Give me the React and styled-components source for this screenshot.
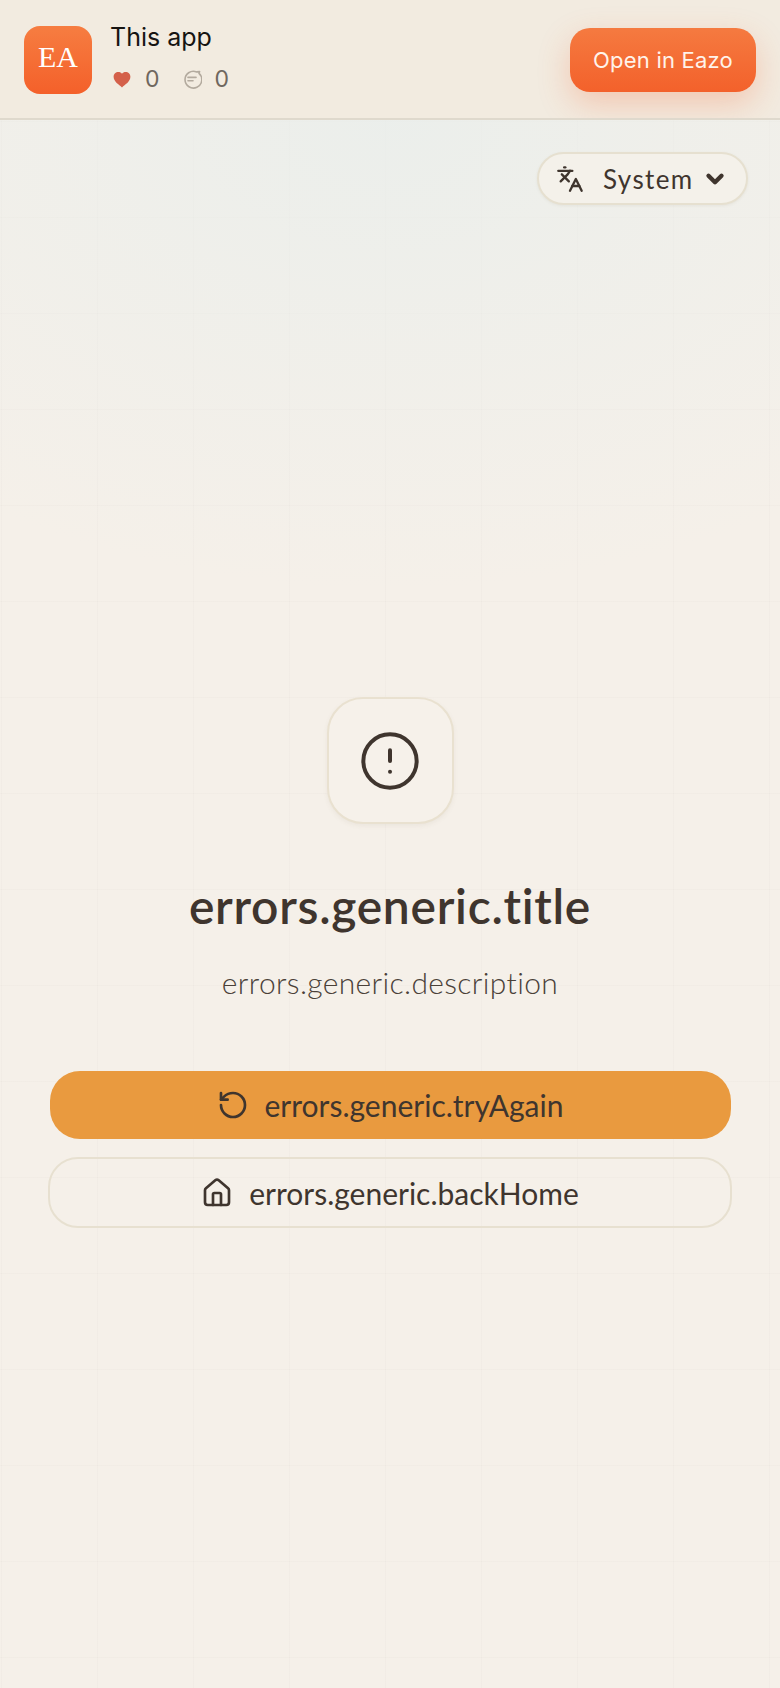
import React from 'react';
import styled, { createGlobalStyle } from 'styled-components';
import { ChevronDown, CircleAlert, House, Languages, RotateCcw } from 'lucide-react';

const GlobalStyle = createGlobalStyle`
	html,
	body {
		margin: 0;
		padding: 0;
		background: #f5f0e9;
	}
	* {
		box-sizing: border-box;
	}
`;

const App = () => {
	return (
		<Page>
			<GlobalStyle />
			<TopBar>
				<AppIcon>EA</AppIcon>
				<AppInfo>
					<AppName>This app</AppName>
					<Stats>
						<Stat>
							<svg width="20" height="20" viewBox="0 0 20 20">
								<path
									d="M10 18.4 C7 15.8 1.6 12.6 1.6 7.8 C1.6 4.9 3.8 3 6.3 3 C8 3 9.2 3.6 10 4.7 C10.8 3.6 12 3 13.7 3 C16.2 3 18.4 4.9 18.4 7.8 C18.4 12.6 13 15.8 10 18.4 Z"
									fill="#d4604a"
								/>
							</svg>
							<StatValue>0</StatValue>
						</Stat>
						<Stat>
							<svg width="20" height="20" viewBox="0 0 20 20" fill="none" stroke="#b3aa9e" strokeWidth="1.6" strokeLinecap="round">
								<path d="M17.6 2.6 L17 4.4 A8.4 8.4 0 1 1 14.6 2.9 Z" strokeLinejoin="round" />
								<path d="M6 8.4 H14" />
								<path d="M6 11.8 H11" />
							</svg>
							<StatValue>0</StatValue>
						</Stat>
					</Stats>
				</AppInfo>
				<OpenButton>Open in Eazo</OpenButton>
			</TopBar>
			<Content>
				<LangRow>
					<LangPill>
						<Languages size={28} strokeWidth={2} />
						<LangLabel>System</LangLabel>
						<ChevronDown size={26} strokeWidth={4} />
					</LangPill>
				</LangRow>
				<ErrorBlock>
					<IconCard>
						<CircleAlert size={64} strokeWidth={1.5} />
					</IconCard>
					<Title>errors.generic.title</Title>
					<Description>errors.generic.description</Description>
					<Actions>
						<PrimaryAction>
							<RotateCcw size={32} strokeWidth={2} />
							errors.generic.tryAgain
						</PrimaryAction>
						<SecondaryAction>
							<House size={32} strokeWidth={2} />
							errors.generic.backHome
						</SecondaryAction>
					</Actions>
				</ErrorBlock>
			</Content>
		</Page>
	);
};

export default App;

const Page = styled.div`
	width: 780px;
	height: 1688px;
	overflow: hidden;
	display: flex;
	flex-direction: column;
	color: #3f352e;
	font-family: 'Lato', 'Noto Sans', sans-serif;
	font-variant-ligatures: none;
	background-color: #f5f0e9;
	background-image:
		radial-gradient(ellipse 720px 470px at 390px 0px, rgba(232, 238, 236, 0.75), rgba(232, 238, 236, 0) 100%),
		linear-gradient(rgba(120, 100, 70, 0.022) 1px, transparent 1px),
		linear-gradient(90deg, rgba(120, 100, 70, 0.022) 1px, transparent 1px);
	background-size: auto, 96px 96px, 96px 96px;
	background-position: 0 119px, 1px 121px, 1px 121px;
	background-repeat: no-repeat, repeat, repeat;
`;
const TopBar = styled.header`
	display: flex;
	align-items: center;
	height: 120px;
	flex-shrink: 0;
	padding: 2px 24px 0;
	overflow: hidden;
	background: #f2ebe0;
	border-bottom: 2px solid #dfd9cd;
`;
const AppIcon = styled.div`
	display: flex;
	align-items: center;
	justify-content: center;
	width: 68px;
	height: 68px;
	border-radius: 16px;
	padding-bottom: 6px;
	color: #fff;
	font-family: 'Liberation Serif', serif;
	font-size: 30px;
	background: linear-gradient(180deg, #f67d41, #f4602a);
`;
const AppInfo = styled.div`
	display: flex;
	flex-direction: column;
	gap: 13px;
	margin-left: 18px;
	margin-top: -6px;
	flex: 1;
`;
const AppName = styled.div`
	color: #161412;
	font-family: 'Inter', sans-serif;
	font-size: 25px;
	line-height: 30px;
`;
const Stats = styled.div`
	display: flex;
	gap: 22px;
	padding-left: 2px;
`;
const Stat = styled.div`
	display: flex;
	align-items: center;
	gap: 13px;
`;
const StatValue = styled.span`
	color: #6f675e;
	font-family: 'Inter', sans-serif;
	font-size: 23px;
	line-height: 28px;
`;
const OpenButton = styled.button`
	width: 186px;
	height: 64px;
	border: none;
	border-radius: 20px;
	color: #fff3ea;
	font-family: 'Inter', sans-serif;
	font-size: 22px;
	letter-spacing: 0.2px;
	background: linear-gradient(180deg, #f57a40, #f3612b);
	box-shadow: 0 12px 32px rgba(244, 97, 43, 0.26);
`;
const Content = styled.main`
	flex: 1;
	display: flex;
	flex-direction: column;
`;
const LangRow = styled.div`
	display: flex;
	justify-content: flex-end;
	padding: 32px 32px 0 0;
`;
const LangPill = styled.div`
	display: flex;
	align-items: center;
	width: 211px;
	height: 53px;
	padding: 0 18px 0 17px;
	border: 2px solid #e6e0d0;
	border-radius: 27px;
	background: #f4f1ea;
	box-shadow: 0 1px 3px rgba(120, 100, 70, 0.08);
`;
const LangLabel = styled.span`
	flex: 1;
	margin-left: 19px;
	font-size: 26px;
	letter-spacing: 1.4px;
`;
const ErrorBlock = styled.section`
	display: flex;
	flex-direction: column;
	align-items: center;
	padding: 492px 48px 0;
`;
const IconCard = styled.div`
	display: flex;
	align-items: center;
	justify-content: center;
	width: 127px;
	height: 127px;
	border: 2px solid #e9e1d0;
	border-radius: 36px;
	background: #f6f1ea;
	box-shadow: 0 2px 5px rgba(120, 100, 70, 0.07);
`;
const Title = styled.h1`
	margin: 50px 0 0;
	font-size: 48px;
	line-height: 64px;
	font-weight: 600;
	letter-spacing: 0.7px;
`;
const Description = styled.p`
	margin: 25px 0 0;
	color: #4a4038;
	font-size: 30px;
	line-height: 38px;
	font-weight: 300;
	letter-spacing: 0.35px;
`;
const Actions = styled.div`
	display: flex;
	flex-direction: column;
	align-items: center;
	gap: 18px;
	width: 100%;
	margin-top: 70px;
`;
const PrimaryAction = styled.button`
	display: flex;
	align-items: center;
	justify-content: center;
	gap: 16px;
	width: 681px;
	height: 68px;
	border: none;
	border-radius: 30px;
	color: #3f352e;
	font-family: inherit;
	font-size: 30px;
	line-height: 36px;
	background: #e99a3f;
`;
const SecondaryAction = styled(PrimaryAction)`
	width: 684px;
	height: 71px;
	border: 2px solid #e7e0d0;
	background: transparent;
`;
